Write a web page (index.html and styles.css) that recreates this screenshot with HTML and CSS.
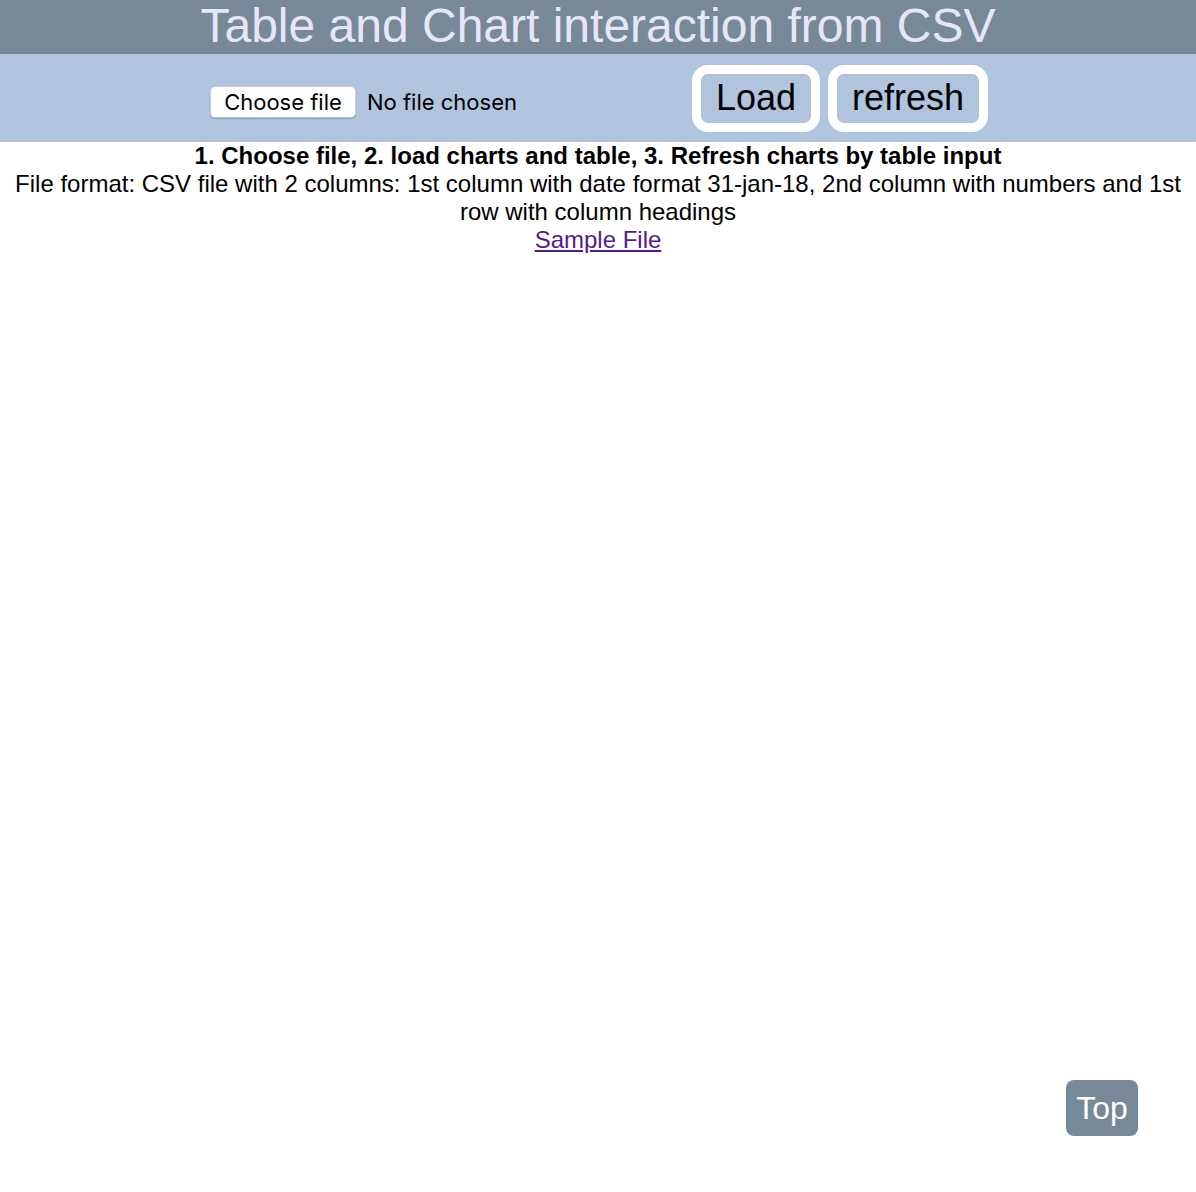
FILE: index.html
```html
<!DOCTYPE html>
<html>
<head>
<meta charset="utf-8">
<title>Table and Chart interaction from CSV</title>
<link rel="stylesheet" href="styles.css">
</head>
<body>
<header class="title-bar">
  <h1 class="title">Table and Chart interaction from CSV</h1>
</header>
<div class="controls">
  <div class="file-picker">
    <span class="file-btn">Choose file</span>
    <span class="file-name">No file chosen</span>
  </div>
  <div class="actions">
    <button class="big-btn">Load</button>
    <button class="big-btn">refresh</button>
  </div>
</div>
<div class="info">
  <div class="steps">1. Choose file, 2. load charts and table, 3. Refresh charts by table input</div>
  <div class="format">File format: CSV file with 2 columns: 1st column with date format 31-jan-18, 2nd column with numbers and 1st row with column headings</div>
  <a class="sample" href="#">Sample File</a>
</div>
<a class="top-btn" href="#">Top</a>
</body>
</html>
```
FILE: styles.css
```css
html, body {
  margin: 0;
  padding: 0;
  background: #ffffff;
  font-family: "Liberation Sans", Arial, sans-serif;
}
.title-bar {
  background: #778899;
  height: 54px;
  text-align: center;
}
.title {
  margin: 0;
  font-weight: normal;
  font-size: 48px;
  line-height: 52px;
  color: #e6e6fa;
}
.controls {
  background: #b0c4de;
  height: 88px;
  display: flex;
  align-items: center;
}
.file-picker {
  display: flex;
  align-items: center;
  margin-left: 210px;
  width: 482px;
  padding-top: 7px;
}
.file-btn {
  display: inline-block;
  box-sizing: border-box;
  height: 32px;
  width: 146px;
  line-height: 31px;
  text-align: center;
  background: #ffffff;
  border: 1px solid #c4ccd8;
  border-radius: 5px;
  box-shadow: 0 1px 1px rgba(0, 0, 0, 0.2);
  font-family: Inter, "Liberation Sans", sans-serif;
  font-size: 22px;
  color: #000;
}
.file-name {
  margin-left: 11px;
  font-family: Inter, "Liberation Sans", sans-serif;
  font-size: 22px;
  color: #000;
}
.actions {
  display: flex;
  gap: 8px;
}
.big-btn {
  box-sizing: border-box;
  height: 67px;
  background: #b0c4de;
  border: 9px solid #ffffff;
  border-radius: 16px;
  padding: 0 15px;
  font-family: "Liberation Sans", Arial, sans-serif;
  font-size: 36px;
  color: #000;
}
.info {
  text-align: center;
  font-size: 24px;
  line-height: 28px;
  color: #000;
  padding: 0 10px;
}
.steps {
  font-weight: bold;
}
.sample {
  color: #551a8b;
  text-decoration: underline;
}
.top-btn {
  position: fixed;
  right: 58px;
  bottom: 56px;
  width: 72px;
  height: 56px;
  line-height: 56px;
  text-align: center;
  background: #778899;
  color: #ffffff;
  border-radius: 8px;
  font-size: 32px;
  text-decoration: none;
}
```
